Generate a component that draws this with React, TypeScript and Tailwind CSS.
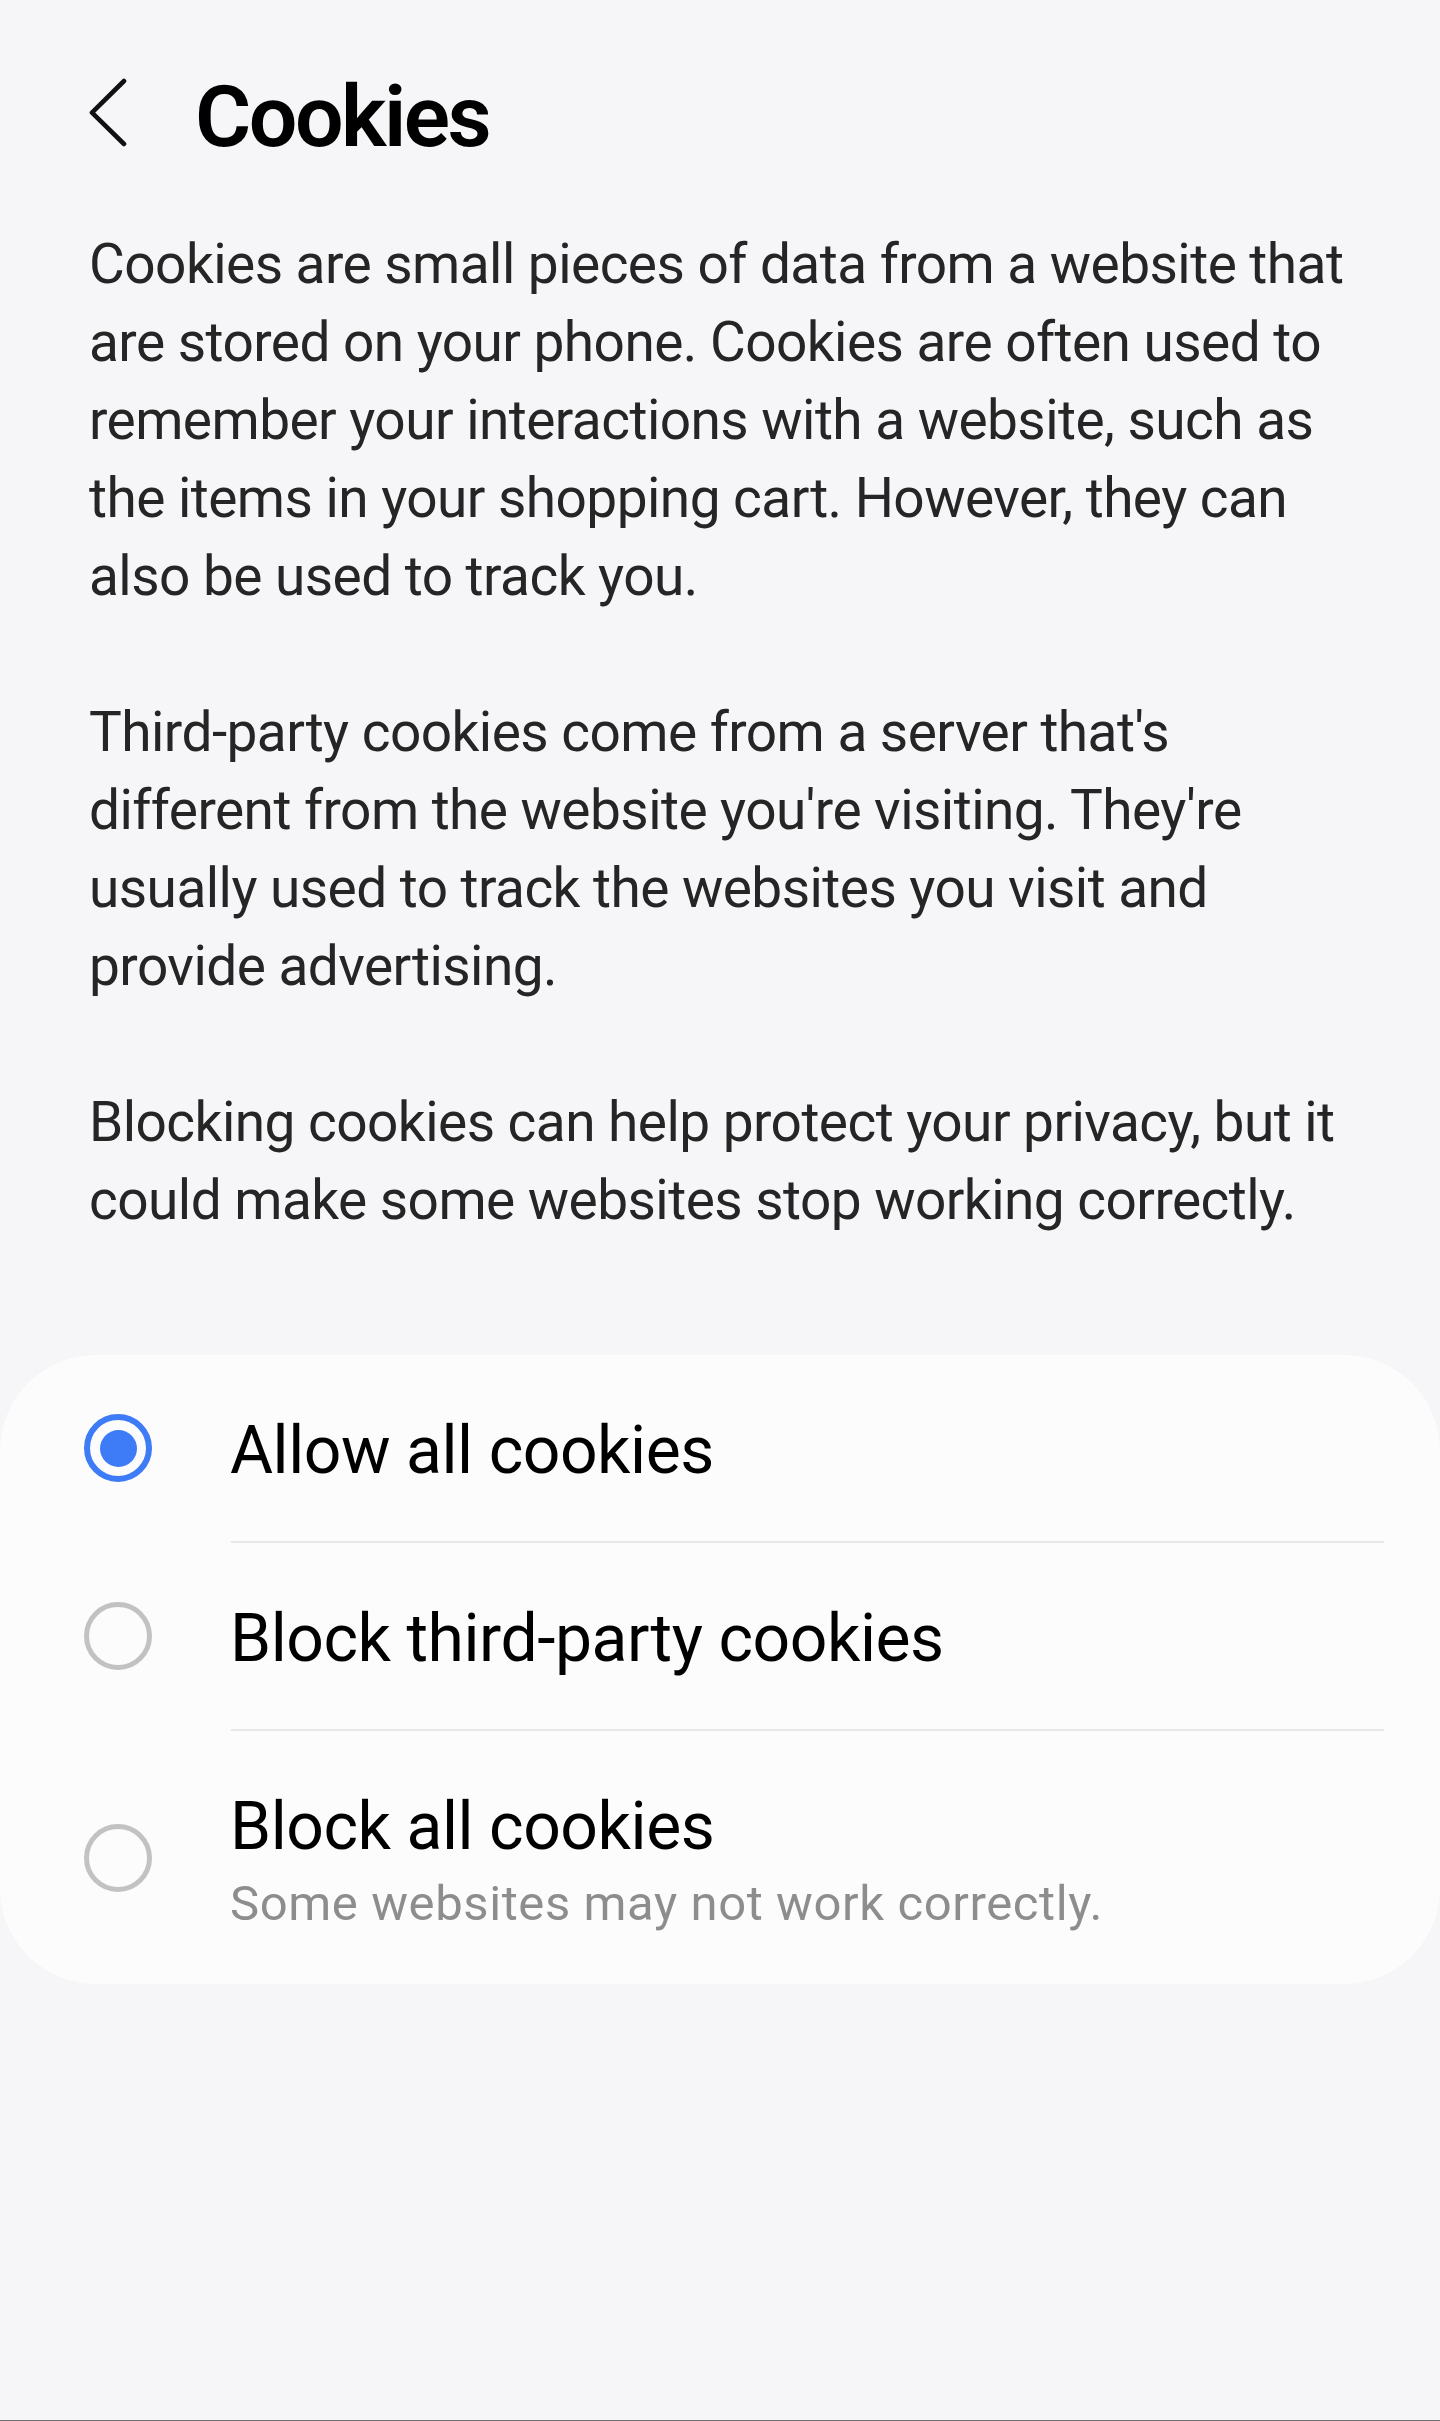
import React from "react";

const font = { fontFamily: "Roboto, 'Noto Sans', 'Liberation Sans', sans-serif" };

function Radio({ checked }: { checked: boolean }) {
  if (checked) {
    return (
      <div className="w-[68px] h-[68px] shrink-0 rounded-full border-[6px] border-[#3e7bf6] flex items-center justify-center">
        <div className="w-[37px] h-[37px] rounded-full bg-[#3e7bf6]" />
      </div>
    );
  }
  return <div className="w-[68px] h-[68px] shrink-0 rounded-full border-[5px] border-[#c2c2c2]" />;
}

export default function App() {
  const p1 = [
    "Cookies are small pieces of data from a website that",
    "are stored on your phone. Cookies are often used to",
    "remember your interactions with a website, such as",
    "the items in your shopping cart. However, they can",
    "also be used to track you.",
  ];
  const p2 = [
    "Third-party cookies come from a server that's",
    "different from the website you're visiting. They're",
    "usually used to track the websites you visit and",
    "provide advertising.",
  ];
  const p3 = [
    "Blocking cookies can help protect your privacy, but it",
    "could make some websites stop working correctly.",
  ];
  const para = (lines: string[], cls: string) => (
    <div className={cls}>
      {lines.map((l, i) => (
        <div key={i} className="whitespace-nowrap">
          {l}
        </div>
      ))}
    </div>
  );
  return (
    <div className="w-[1440px] h-[2421px] bg-[#f6f6f8] flex flex-col" style={font}>
      <div className="flex items-start mt-[74px] h-[86px]">
        <svg className="ml-[88px] mt-[4px] shrink-0" width="42" height="70" viewBox="0 0 42 70">
          <path d="M36 3 L4 34.7 L36 66" fill="none" stroke="#111" strokeWidth="4.6" strokeLinecap="round" strokeLinejoin="round" />
        </svg>
        <div className="ml-[65px] text-[86px] leading-[86px] font-semibold text-black tracking-[-2.5px]">Cookies</div>
      </div>
      <div className="pl-[89px] mt-[65px] text-[55px] leading-[78px] text-[#252525] tracking-[-0.55px]">
        {para(p1, "")}
        {para(p2, "mt-[78px]")}
        {para(p3, "mt-[78px]")}
      </div>
      <div className="mt-[116px] bg-[#fcfcfc] rounded-[96px] flex flex-col">
        <div className="h-[186px] flex items-center pl-[84px]">
          <Radio checked />
          <div className="ml-[78px] mt-[5px] text-[66px] leading-[80px] text-black tracking-[-0.45px]">Allow all cookies</div>
        </div>
        <div className="h-[2px] bg-[#e8e8e8] ml-[231px] mr-[56px]" />
        <div className="h-[186px] flex items-center pl-[84px]">
          <Radio checked={false} />
          <div className="ml-[78px] mt-[5px] text-[66px] leading-[80px] text-black tracking-[-0.45px]">Block third-party cookies</div>
        </div>
        <div className="h-[2px] bg-[#e8e8e8] ml-[231px] mr-[56px]" />
        <div className="h-[253px] flex items-center pl-[84px]">
          <Radio checked={false} />
          <div className="ml-[78px] mt-[12px] flex flex-col">
            <div className="text-[66px] leading-[80px] text-black tracking-[-0.45px]">Block all cookies</div>
            <div className="text-[49px] leading-[74px] text-[#8d8d8d] tracking-[0.6px]">Some websites may not work correctly.</div>
          </div>
        </div>
      </div>
      <div className="flex-1" />
      <div className="h-[1px] bg-[#707070]" />
    </div>
  );
}
